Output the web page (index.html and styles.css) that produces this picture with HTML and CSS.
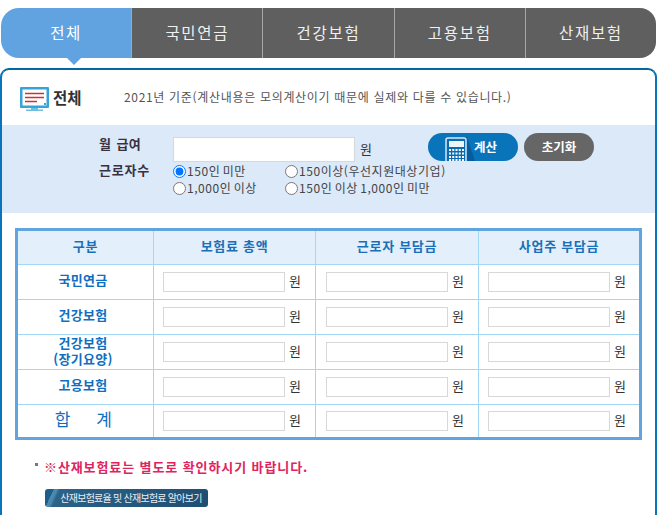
FILE: index.html
```html
<!DOCTYPE html>
<html lang="ko">
<head>
<meta charset="utf-8">
<title>전체</title>
<link rel="stylesheet" href="styles.css">
</head>
<body>
<nav class="tabs">
  <a class="tab active">전체</a>
  <a class="tab">국민연금</a>
  <a class="tab">건강보험</a>
  <a class="tab">고용보험</a>
  <a class="tab">산재보험</a>
</nav>
<main class="panel">
  <header class="head">
    <svg class="head-icon" width="30" height="25" viewBox="0 0 30 25">
      <rect x="0" y="0" width="29" height="21" rx="1" fill="#36a5d6"/>
      <rect x="2.500" y="2.500" width="24" height="16" fill="#fff"/>
      <path d="M5 6.500h19M5 10.500h19M5 14.500h12" stroke="#d32f2f" stroke-width="1.700"/>
      <rect x="24" y="16" width="2" height="2" fill="#36a5d6"/>
      <path d="M11 21h7v1.500h-7zM6 22.500h17V24H6z" fill="#6cc0e6"/>
    </svg>
    <h1 class="head-title">전체</h1>
    <p class="head-note">2021년 기준(계산내용은 모의계산이기 때문에 실제와 다를 수 있습니다.)</p>
  </header>
  <section class="form">
    <div class="form-labels">
      <div class="label pay">월 급여</div>
      <div class="label">근로자수</div>
    </div>
    <div class="form-fields">
      <div class="pay-row">
        <input class="field pay-field" type="text"><span class="won pay-won">원</span>
        <button class="btn calc" type="button">
          <svg class="calc-icon" width="30" height="24" viewBox="0 0 30 24">
            <path d="M19 0h3l8 24H19z" fill="#075c9c"/>
            <path d="M1 24V3a2 2 0 0 1 2-2h16a2 2 0 0 1 2 2v21" fill="#0a6cb0" stroke="#d5eaf8" stroke-width="1.500"/>
            <rect x="4" y="4" width="15" height="6" fill="#eaf5fc"/>
            <path d="M4 13h15M4 16.500h15M4 20h15M4 23h15" stroke="#fff" stroke-width="2" stroke-dasharray="2 1.250"/>
          </svg>
          <span>계산</span>
        </button>
        <button class="btn reset" type="button">초기화</button>
      </div>
      <div class="radios">
        <label class="radio"><input type="radio" name="size" checked>150인 미만</label>
        <label class="radio"><input type="radio" name="size">150이상(우선지원대상기업)</label>
        <label class="radio"><input type="radio" name="size">1,000인 이상</label>
        <label class="radio"><input type="radio" name="size">150인 이상 1,000인 미만</label>
      </div>
    </div>
  </section>
  <table class="rates">
    <thead>
      <tr><th>구분</th><th>보험료 총액</th><th>근로자 부담금</th><th>사업주 부담금</th></tr>
    </thead>
    <tbody>
      <tr><th>국민연금</th>
        <td><input class="field" type="text"><span class="won">원</span></td>
        <td><input class="field" type="text"><span class="won">원</span></td>
        <td><input class="field" type="text"><span class="won">원</span></td></tr>
      <tr><th>건강보험</th>
        <td><input class="field" type="text"><span class="won">원</span></td>
        <td><input class="field" type="text"><span class="won">원</span></td>
        <td><input class="field" type="text"><span class="won">원</span></td></tr>
      <tr><th class="two-line">건강보험<br>(장기요양)</th>
        <td><input class="field" type="text"><span class="won">원</span></td>
        <td><input class="field" type="text"><span class="won">원</span></td>
        <td><input class="field" type="text"><span class="won">원</span></td></tr>
      <tr><th>고용보험</th>
        <td><input class="field" type="text"><span class="won">원</span></td>
        <td><input class="field" type="text"><span class="won">원</span></td>
        <td><input class="field" type="text"><span class="won">원</span></td></tr>
      <tr class="total-row"><th class="total">합 &nbsp; 계</th>
        <td><input class="field" type="text"><span class="won">원</span></td>
        <td><input class="field" type="text"><span class="won">원</span></td>
        <td><input class="field" type="text"><span class="won">원</span></td></tr>
    </tbody>
  </table>
  <p class="notice"><span class="bullet"></span>※산재보험료는 별도로 확인하시기 바랍니다.</p>
  <a class="link-btn">산재보험료율 및 산재보험료 알아보기</a>
</main>
</body>
</html>
```
FILE: styles.css
```css
* { box-sizing: border-box; }
html, body { margin: 0; padding: 0; }
body {
  width: 668px;
  height: 515px;
  overflow: hidden;
  background: #fff;
  font-family: "Noto Sans CJK KR", "Noto Sans", sans-serif;
  color: #333;
}
.tabs {
  display: flex;
  width: 655px;
  height: 50px;
  margin: 8px 0 0 1px;
}
.tab {
  position: relative;
  flex: 1;
  display: flex;
  align-items: center;
  justify-content: center;
  padding-bottom: 2px;
  background: #5f5f5f;
  border-left: 1px solid #a8a8a8;
  color: #f0f0f0;
  font-size: 15.500px;
  letter-spacing: 1.700px;
}
.tab:last-child { border-radius: 0 16px 16px 0; }
.tab.active {
  background: #60a3e0;
  border-left: 0;
  border-radius: 18px 0 0 18px;
  color: #fff;
}
.tab.active::after {
  content: "";
  position: absolute;
  left: 66px;
  top: 50px;
  border-left: 7px solid transparent;
  border-right: 7px solid transparent;
  border-top: 7px solid #60a3e0;
}
.panel {
  position: relative;
  height: 460px;
  margin-top: 10px;
  width: 657px;
  border: 2px solid #0a73bd;
  border-top-color: #04679f;
  border-radius: 9px 9px 0 0;
}
.head {
  display: flex;
  align-items: center;
  height: 55px;
  padding: 3px 0 0 18px;
}
.head-icon { flex: none; }
.head-title {
  margin: 0 0 5px 3px;
  width: 71px;
  font-size: 15.500px;
  font-weight: 700;
  color: #333;
}
.head-note {
  margin: 0 0 6px;
  font-size: 12px;
  color: #555;
  white-space: nowrap;
  letter-spacing: 0.680px;
}
.form {
  display: flex;
  height: 88px;
  background: #dbe9f8;
  padding: 8px 0 0 97px;
}
.form-labels { width: 74px; }
.label {
  font-size: 13px;
  font-weight: 700;
  line-height: 18px;
  letter-spacing: 0.800px;
  color: #3a3040;
}
.label.pay { margin: 2px 0 8px; word-spacing: 1px; letter-spacing: 0.400px; }
.form-fields { width: 440px; }
.pay-row {
  display: flex;
  align-items: flex-start;
}
.field {
  display: block;
  width: 122px;
  height: 20px;
  padding: 0;
  background: #fff;
  border: 1px solid #d8d8d8;
  flex: none;
}
.pay-field { width: 182px; height: 25px; margin-top: 4px; }
.won { font-size: 13px; color: #333; margin-left: 5px; }
.pay-won { margin: 6px 0 0 5px; }
.btn {
  display: flex;
  align-items: center;
  justify-content: center;
  height: 28px;
  border: 0;
  padding: 0;
  border-radius: 14px;
  color: #fff;
  font: 700 12.500px "Noto Sans CJK KR", sans-serif;
}
.calc {
  position: relative;
  width: 90px;
  margin-left: 56px;
  overflow: hidden;
  background: #0a74bb;
  padding: 0 0 1px 25px;
}
.calc span { position: relative; }
.calc-icon { position: absolute; left: 17px; top: 4px; }
.reset {
  width: 70px;
  margin-left: 6px;
  background: #666;
  padding-bottom: 1px;
}
.radios {
  display: grid;
  grid-template-columns: 112px 1fr;
  font-size: 12px;
  line-height: 17px;
  color: #444;
  letter-spacing: 0.550px;
  word-spacing: -1.500px;
}
.radio { display: flex; align-items: center; white-space: nowrap; height: 17px; }
.radio input { width: 13px; height: 13px; margin: 2px 1px 0 0; }
.rates {
  width: 627px;
  margin: 15px 0 0 13px;
  table-layout: fixed;
  border-collapse: separate;
  border-spacing: 0;
  border: 3px solid #62a4df;
}
.rates thead th:nth-child(1) { width: 135px; }
.rates thead th:nth-child(2) { width: 162px; }
.rates thead th:nth-child(3) { width: 163px; }
.rates th, .rates td {
  height: 35px;
  padding: 0;
  border-left: 1px solid #a3d7f6;
  border-top: 1px solid #a3d7f6;
  font-size: 12px;
  vertical-align: middle;
}
.rates tr > :first-child { border-left: 0; }
.rates thead th {
  height: 33px;
  padding-bottom: 4px;
  border-top: 0;
  background: #e3effa;
  color: #1a6fb8;
  font-size: 13px;
  letter-spacing: 0.700px;
}
.rates tbody th {
  padding: 0 5px 5px 0;
  color: #0f6fc0;
  letter-spacing: 0.300px;
  font-size: 13px;
}
.rates tbody th.two-line { line-height: 16px; padding-bottom: 2px; }
.rates tbody th.total {
  font-size: 17px;
  font-weight: 400;
  letter-spacing: 2.500px;
  word-spacing: 0.500px;
  padding: 0 2px 5px 0;
}
.rates .total-row th, .rates .total-row td { height: 33px; }
.rates td { padding-left: 9px; }
.rates td:nth-child(3) { padding-left: 10px; }
.rates td .field { display: inline-block; vertical-align: middle; }
.rates td .won { display: inline-block; vertical-align: middle; margin: 0 0 3px 4px; }
.notice {
  display: flex;
  align-items: center;
  margin: 17px 0 0 33px;
  height: 18px;
  font-size: 13px;
  font-weight: 700;
  color: #e0245e;
  letter-spacing: 0.900px;
}
.bullet {
  width: 3px;
  height: 3px;
  margin: 0 6px 3px 0;
  background: #777;
}
.link-btn {
  display: flex;
  align-items: center;
  justify-content: center;
  width: 163px;
  height: 18px;
  margin: 14px 0 0 43px;
  padding: 0 0 1px 9px;
  border-radius: 3px;
  background: linear-gradient(115deg, #1d5f8a 0 8px, #4a88b0 8px 11px, #2a6288 14px, #1f4e72 100%);
  color: #e8eef4;
  font-size: 10px;
  letter-spacing: -0.750px;
}
```
